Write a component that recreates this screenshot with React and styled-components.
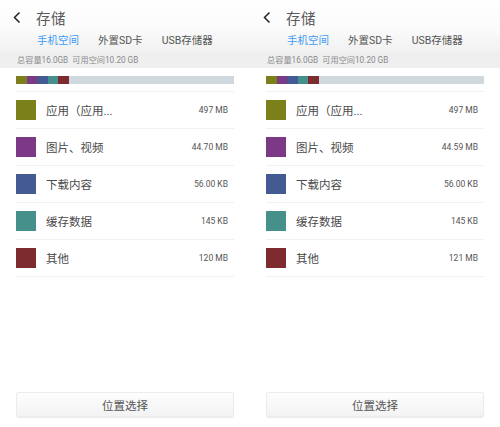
import styled, { createGlobalStyle } from "styled-components";

const GlobalStyle = createGlobalStyle`
  html, body {
    margin: 0;
    padding: 0;
    background: #fff;
  }
  body {
    font-family: Roboto, "Noto Sans CJK SC", sans-serif;
  }
`;

const Screen = styled.div`
  display: flex;
  width: 500px;
  height: 427px;
  overflow: hidden;
`;

const Panel = styled.div`
  width: 250px;
  height: 427px;
  display: flex;
  flex-direction: column;
  background: #fff;
`;

const Header = styled.div`
  height: 52px;
  background: linear-gradient(#ffffff 0%, #fbfbfb 55%, #f1f1f1 100%);
  display: flex;
  flex-direction: column;
`;

const TopBar = styled.div`
  height: 34px;
  display: flex;
  align-items: center;
  padding-left: 12px;
  column-gap: 14px;
`;

const Title = styled.span`
  font-size: 14.5px;
  color: #5a5a5a;
  letter-spacing: 0.5px;
`;

const Tabs = styled.div`
  height: 18px;
  display: flex;
  align-items: flex-start;
  padding-left: 37px;
  column-gap: 19px;
`;

const Tab = styled.span`
  font-size: 10.5px;
  line-height: 14px;
  color: ${(p) => (p.active ? "#3d9bf2" : "#555")};
`;

const InfoStrip = styled.div`
  height: 16px;
  background: #efefef;
  font-size: 8.2px;
  color: #8a8a8a;
  line-height: 17px;
  padding-left: 17px;
`;

const Bar = styled.div`
  display: flex;
  height: 8px;
  margin: 8px 16px 0;
  background: #cfd8dc;
`;

const Segment = styled.div`
  width: ${(p) => p.w}px;
  background: ${(p) => p.color};
`;

const List = styled.div`
  margin: 7px 16px 0;
  border-top: 1px solid #f1f1f1;
`;

const Row = styled.div`
  height: 36px;
  display: flex;
  align-items: center;
  border-bottom: 1px solid #f1f1f1;
  padding-right: 6px;
`;

const Swatch = styled.div`
  width: 20px;
  height: 20px;
  background: ${(p) => p.color};
  margin-right: 10px;
`;

const Label = styled.span`
  flex: 1;
  font-size: 11.5px;
  color: #4a4a4a;
`;

const Size = styled.span`
  font-size: 8.5px;
  color: #555;
`;

const Footer = styled.div`
  margin-top: auto;
  padding: 0 16px 10px;
`;

const Button = styled.button`
  width: 100%;
  height: 25px;
  border: 1px solid #ececec;
  border-radius: 2px;
  background: linear-gradient(#fdfdfd, #f3f3f3);
  box-shadow: 0 1px 1px rgba(0, 0, 0, 0.08);
  font-family: Roboto, "Noto Sans CJK SC", sans-serif;
  font-size: 11.5px;
  color: #555;
  padding: 0;
`;

const colors = ["#7b801b", "#7c3985", "#435a93", "#46908c", "#7d2b2f"];

const Back = () => (
  <svg width="10" height="13" viewBox="0 0 10 13">
    <path d="M7.5 1.5 L2.5 6.5 L7.5 11.5" fill="none" stroke="#222" strokeWidth="1.5" />
  </svg>
);

function StoragePanel({ items }) {
  return (
    <Panel>
      <Header>
        <TopBar>
          <Back />
          <Title>存储</Title>
        </TopBar>
        <Tabs>
          <Tab active>手机空间</Tab>
          <Tab>外置SD卡</Tab>
          <Tab>USB存储器</Tab>
        </Tabs>
      </Header>
      <InfoStrip>总容量16.0GB&nbsp; 可用空间10.20 GB</InfoStrip>
      <Bar>
        {colors.map((c) => (
          <Segment key={c} color={c} w={10.5} />
        ))}
      </Bar>
      <List>
        {items.map((it, i) => (
          <Row key={it.label}>
            <Swatch color={colors[i]} />
            <Label>{it.label}</Label>
            <Size>{it.size}</Size>
          </Row>
        ))}
      </List>
      <Footer>
        <Button>位置选择</Button>
      </Footer>
    </Panel>
  );
}

const left = [
  { label: "应用（应用...", size: "497 MB" },
  { label: "图片、视频", size: "44.70 MB" },
  { label: "下载内容", size: "56.00 KB" },
  { label: "缓存数据", size: "145 KB" },
  { label: "其他", size: "120 MB" },
];

const right = [
  { label: "应用（应用...", size: "497 MB" },
  { label: "图片、视频", size: "44.59 MB" },
  { label: "下载内容", size: "56.00 KB" },
  { label: "缓存数据", size: "145 KB" },
  { label: "其他", size: "121 MB" },
];

export default function App() {
  return (
    <>
      <GlobalStyle />
      <Screen>
        <StoragePanel items={left} />
        <StoragePanel items={right} />
      </Screen>
    </>
  );
}
